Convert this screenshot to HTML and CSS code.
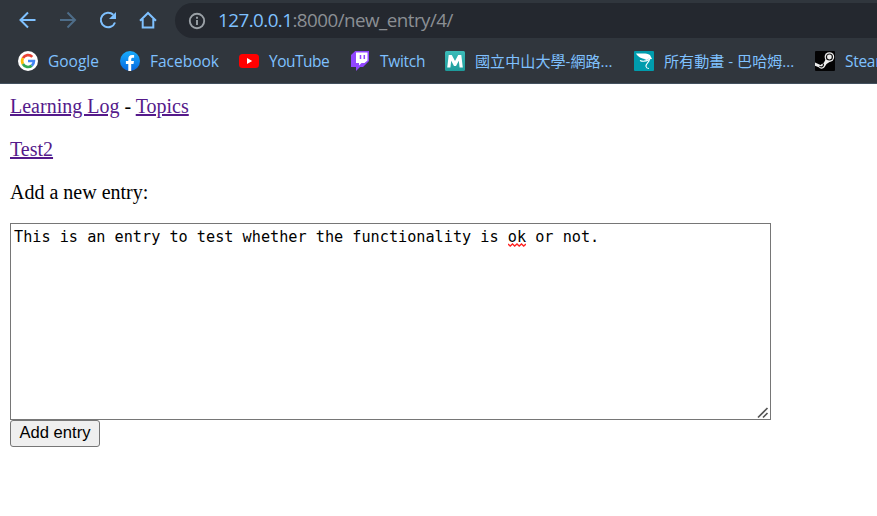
FILE: index.html
```html
<!DOCTYPE html>
<html lang="en">
<head>
<meta charset="utf-8">
<title>Learning Log</title>
<link rel="stylesheet" href="styles.css">
</head>
<body>
<header class="browser">
  <div class="toolbar">
    <nav class="controls">
      <svg width="20" height="20" viewBox="0 0 20 20"><path d="M17.5 10H3M10 2.5 2.5 10l7.500 7.500"/></svg>
      <svg class="disabled" width="20" height="20" viewBox="0 0 20 20"><path d="M2 10h14.500M9.500 2.500 17 10l-7.500 7.500"/></svg>
      <svg width="20" height="20" viewBox="0 0 20 20"><path d="M17 12.500A7.300 7.300 0 1 1 15.300 4.800"/><path class="solid" d="M18 2v7h-7z"/></svg>
      <svg width="20" height="20" viewBox="0 0 20 20"><path d="M2 10.700 10 3l8 7.700M4.700 9v8.500h10.600V9"/></svg>
    </nav>
    <div class="address">
      <svg width="18" height="18" viewBox="0 0 18 18"><circle cx="9" cy="9" r="7.200"/><path d="M9 8v5M9 4.700v2"/></svg>
      <span class="url"><span class="host">127.0.0.1</span>:8000/new_entry/4/</span>
    </div>
  </div>
  <div class="bookmarks">
    <div class="bookmark google">
      <svg width="20" height="20" viewBox="0 0 20 20"><circle cx="10" cy="10" r="10" fill="#fff"/><g fill="none" stroke-width="2.700"><path stroke="#ea4335" d="M4.900 7.200A5.900 5.900 0 0 1 14.300 5.900"/><path stroke="#fbbc05" d="M4.900 7.200a5.900 5.900 0 0 0 0 5.800"/><path stroke="#34a853" d="M4.900 13a5.900 5.900 0 0 0 8.900 1.600"/><path stroke="#4285f4" d="M10 10h5.900a5.900 5.900 0 0 1-2.100 4.600"/></g></svg>
      <span>Google</span>
    </div>
    <div class="bookmark facebook">
      <svg width="20" height="20" viewBox="0 0 20 20"><defs><linearGradient id="fb" x2="0" y2="1"><stop stop-color="#19acfb"/><stop offset="1" stop-color="#0668e1"/></linearGradient></defs><circle cx="10" cy="10" r="10" fill="url(#fb)"/><path fill="#fff" d="M8.300 20v-7H5.900v-3h2.400V8c0-2.700 1.400-4.100 3.800-4.100.8 0 1.500.1 2 .2v2.600h-1.300c-1.200 0-1.600.6-1.600 1.500V10H14l-.5 3h-2.300v7z"/></svg>
      <span>Facebook</span>
    </div>
    <div class="bookmark youtube">
      <svg width="20" height="20" viewBox="0 0 20 20"><rect y="3" width="20" height="14" rx="3.500" fill="#f00"/><path fill="#fff" d="m8 7 5.200 3L8 13z"/></svg>
      <span>YouTube</span>
    </div>
    <div class="bookmark twitch">
      <svg width="20" height="20" viewBox="0 0 20 20"><path fill="#9146ff" d="M5.200 0H19v10l-6 6h-3l-4 4v-4H1V4z"/><path fill="#fff" d="M6 1.500h11.500v8L14.500 12h-3L9 14.500V12H6z"/><path stroke="#9146ff" stroke-width="1.500" d="M10.500 4v4M14.300 4v4"/></svg>
      <span>Twitch</span>
    </div>
    <div class="bookmark university">
      <svg width="20" height="20" viewBox="0 0 20 20"><defs><linearGradient id="un" x2="0" y2="1"><stop stop-color="#3cbcb9"/><stop offset="1" stop-color="#1d9b9b"/></linearGradient></defs><rect width="20" height="20" rx="1.500" fill="url(#un)"/><path fill="#fff" d="M2.200 16.500 3.700 4h3.100L10 10l3.200-6h3.100l1.500 12.500h-3.200l-.8-6.700L11 15H9L6.200 9.800l-.8 6.700z"/></svg>
      <span>國立中山大學-網路...</span>
    </div>
    <div class="bookmark anime">
      <svg width="20" height="20" viewBox="0 0 20 20"><rect width="20" height="20" rx="1" fill="#009cad"/><path fill="#fff" d="M2 2.500c5 .5 10-1 14 1.500l2 4-2 .2-1-.7c-1.500 1.500-3.500 2-5 1.500l2.500-.8C8 8 4.500 6.500 2 2.500z"/><path fill="none" stroke="#fff" stroke-width="1.100" d="M6 9.500c3 1.500 6 1 9.500-1.300-.2 3.300-4 4.500-3.500 7.300.3 1.300 1.500 2 3 2"/></svg>
      <span>所有動畫 - 巴哈姆...</span>
    </div>
    <div class="bookmark steam">
      <svg width="20" height="20" viewBox="0 0 20 20"><rect width="20" height="20" rx="1" fill="#030304"/><path fill="#eee" d="M0 11.500 5.500 14l3.500-2.500 2-4L16 10l-4.500 3-2 3.300a3.600 3.600 0 0 1-5.800 0L0 14.700z"/><circle cx="14.400" cy="6" r="4.800" fill="#eee"/><circle cx="14.400" cy="6" r="3" fill="#eee" stroke="#111" stroke-width="1.200"/><path fill="none" stroke="#111" stroke-width="1.100" d="M4.500 15.200c3 1.800 5.200-1 3-3"/></svg>
      <span>Steam</span>
    </div>
  </div>
</header>
<main class="page">
  <p><a>Learning Log</a> - <a>Topics</a></p>
  <p><a>Test2</a></p>
  <p class="prompt">Add a new entry:</p>
  <div class="entry">This is an entry to test whether the functionality is <span class="misspelled">ok<svg width="18" height="4" viewBox="0 0 18 4"><path d="m0 1 2.200 2L4.500 1l2.200 2L9 1l2.200 2 2.300-2 2.200 2L18 1"/></svg></span> or not.
    <svg class="grip" width="12" height="12" viewBox="0 0 12 12"><path d="m1 10.500 9.500-9.500M6 10.500 10.500 6"/></svg>
  </div>
  <button class="submit" type="button">Add entry</button>
</main>
</body>
</html>
```
FILE: styles.css
```css
* { box-sizing: border-box; }
body {
  margin: 0;
  height: 516px;
  overflow: hidden;
  background: #fff;
  color: #000;
}
.browser {
  height: 84px;
  overflow: hidden;
  background: #30363d;
  border-bottom: 1px solid #43515f;
}
.toolbar {
  display: flex;
  padding: 3px 0 0 17.500px;
  height: 38px;
}
.controls {
  display: flex;
  align-items: center;
  gap: 20px;
  width: 157.500px;
  height: 34px;
}
.controls svg {
  flex: none;
  fill: none;
  stroke: #7fc1ff;
  stroke-width: 2;
}
.controls .disabled { stroke: #4e6d89; }
.controls .solid { fill: #7fc1ff; stroke: none; }
.address {
  display: flex;
  align-items: center;
  flex: 1;
  height: 35px;
  padding-left: 13px;
  gap: 12px;
  border-radius: 18px 0 0 18px;
  background: #24282f;
}
.address svg { fill: none; stroke: #9aa0a6; stroke-width: 1.900; }
.url {
  margin-top: -1px;
  font: 18.800px/26px "Open Sans", sans-serif;
  letter-spacing: -0.530px;
  color: #8b8f94;
}
.host { color: #7fc1ff; }
.bookmarks {
  display: flex;
  align-items: center;
  height: 46px;
  padding-left: 18px;
}
.bookmark {
  display: flex;
  flex: none;
  align-items: center;
  gap: 10px;
  white-space: nowrap;
  color: #7fc1ff;
  font: 15.500px/22px "Open Sans", "Noto Sans CJK TC", sans-serif;
}
.bookmark svg { flex: none; }
.google { width: 102px; }
.facebook { width: 119px; }
.youtube { width: 111px; letter-spacing: -0.500px; }
.twitch { width: 95px; letter-spacing: -0.300px; }
.university { width: 189px; font-size: 15.100px; }
.anime { width: 181px; font-size: 15.100px; }
.steam { letter-spacing: -0.300px; }
.page {
  padding: 11px 10px 0;
  font: 20px/23px "Liberation Serif", serif;
}
p { margin: 0 0 20px; }
.prompt { margin-bottom: 19px; }
a {
  color: #551a8b;
  text-decoration: underline;
}
.entry {
  position: relative;
  width: 761px;
  height: 197px;
  padding: 3px;
  border: 1px solid #767676;
  font: 15.200px/20px "DejaVu Sans Mono", monospace;
}
.misspelled { position: relative; }
.misspelled svg {
  position: absolute;
  left: 0;
  bottom: -1px;
  fill: none;
  stroke: #f22;
  stroke-width: 1.400;
}
.grip {
  position: absolute;
  right: 1px;
  bottom: 0;
  fill: none;
  stroke: #555;
  stroke-width: 1.700;
}
.submit {
  display: block;
  width: 90px;
  height: 27px;
  padding: 0 0 2px;
  border: 1px solid #767676;
  border-radius: 3px;
  background: #efefef;
  color: #000;
  font: 16.600px/20px "Liberation Sans", sans-serif;
}
```
